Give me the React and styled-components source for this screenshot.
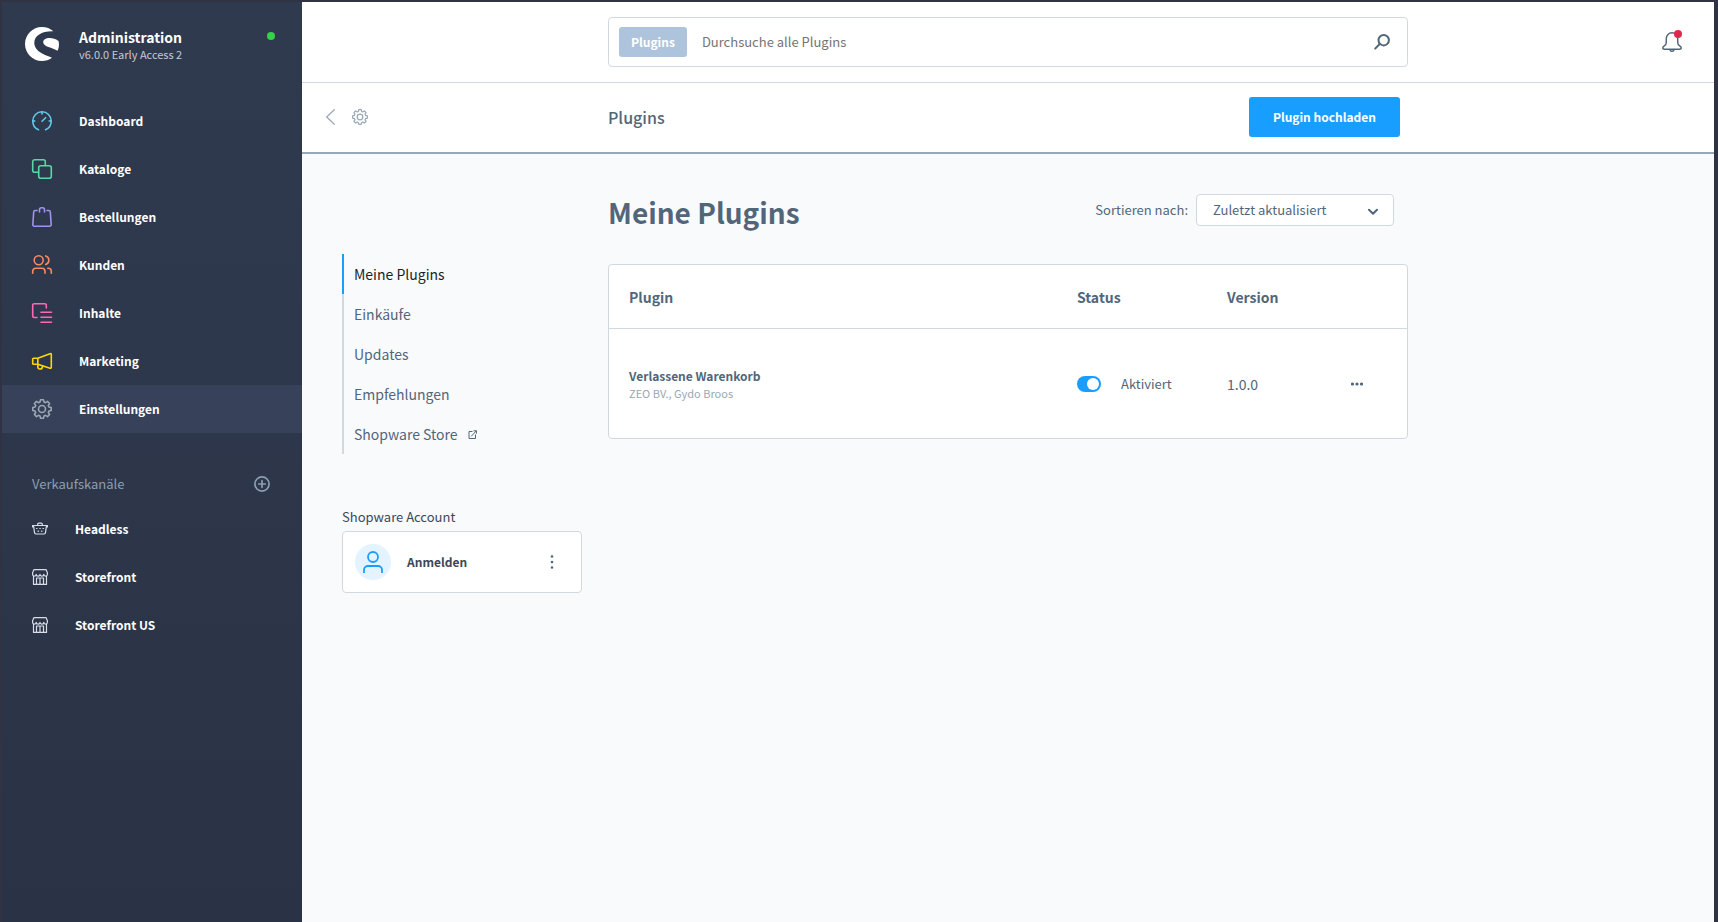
import { useState } from "react";
import styled, { createGlobalStyle } from "styled-components";

const line = { fill: "none", stroke: "currentColor", strokeLinecap: "round", strokeLinejoin: "round" };

function Logo() {
    return (
        <svg width="34" height="34" viewBox="0 0 34 34" fill="#fff" aria-hidden="true">
            <path d="M28.4 4.300C25.300 1.500 21.300 0 17 0 7.600 0 0 7.600 0 17s7.600 17 17 17c3.700 0 7.100-1.100 10-3.200C22 28.400 9.300 25.500 9.300 15.800 9.300 8.500 17 3.900 28.400 4.300Z" />
            <path d="M33.500 14C30.500 11.800 27.500 11 24.800 11c-4.200 0-6.600 1.800-6.600 4.200 0 4.700 9.300 5.200 14.400 8.600C33.900 21 34.400 17.500 33.500 14Z" />
        </svg>
    );
}

function Gear({ size = 20, width = 1.6 }) {
    return (
        <svg width={size} height={size} viewBox="0 0 20 20" {...line} strokeWidth={width} aria-hidden="true">
            <path d="M8.500.8h3l.5 2.300 1.500.6 2-1.300 2.100 2.100-1.300 2 .6 1.500 2.300.5v3l-2.300.5-.6 1.500 1.300 2-2.100 2.100-2-1.300-1.500.6-.5 2.300h-3L8 16.900l-1.500-.6-2 1.300-2.100-2.100 1.300-2-.6-1.500L.8 11.500v-3L3.100 8l.6-1.500-1.300-2 2.100-2.100 2 1.300L8 3.100z" />
            <circle cx="10" cy="10" r="3.500" />
        </svg>
    );
}

const icons = {
    dashboard: (
        <>
            <path d="M6.500 18.700C3.100 17.400.8 14 .8 10A9.200 9.200 0 0 1 19.200 10c0 4-2.300 7.400-5.700 8.700" />
            <path d="M10 10.300 13.600 6.700M10 .8v2.100M.8 10h2M17.200 10h2" />
        </>
    ),
    catalog: (
        <>
            <rect x="6.700" y="6.700" width="12.600" height="12.600" rx="2" />
            <path d="M6.500 13.300H2.700a2 2 0 0 1-2-2V2.700a2 2 0 0 1 2-2h8.600a2 2 0 0 1 2 2v3.800" />
        </>
    ),
    orders: (
        <>
            <path d="M5 3.500H3.300a1.600 1.600 0 0 0-1.600 1.500L.8 17.600a1.600 1.600 0 0 0 1.600 1.700h15.200a1.600 1.600 0 0 0 1.600-1.700L18.300 5a1.600 1.600 0 0 0-1.600-1.500H15" />
            <path d="M7.500 5V2.700A2 2 0 0 1 9.500.7h1a2 2 0 0 1 2 2V5" />
        </>
    ),
    customers: (
        <>
            <circle cx="6.700" cy="5.200" r="4.500" />
            <path d="M.7 18.300v-2.100a3 3 0 0 1 3-3H10a3 3 0 0 1 3 3v2.100M13.700.9a4.500 4.500 0 0 1 0 8.600M15.800 13.200h.5a3 3 0 0 1 3 3v2.100" />
        </>
    ),
    content: (
        <path d="M5 14.500H2.200a1.500 1.500 0 0 1-1.500-1.500V2.200A1.500 1.500 0 0 1 2.200.7h10.600a1.500 1.500 0 0 1 1.500 1.500V5M9 9.300h10.500M9 14.300h10.500M9 19.300h10.500" />
    ),
    marketing: (
        <path d="M5.800 7.300 18 2.700c.8-.3 1.300.1 1.300.8v12.900c0 .7-.5 1.100-1.300.8L5.800 13.300zM5.800 7.300H1.500a.8.8 0 0 0-.8.8v4.400c0 .5.300.8.8.8h4.300M5.800 13.300v2.300a2.300 2.300 0 0 0 4.600.3v-.9" />
    ),
};

function MenuIcon({ name }) {
    if (name === "settings") return <Gear />;
    return (
        <svg width="20" height="20" viewBox="0 0 20 20" overflow="visible" {...line} strokeWidth="1.600" aria-hidden="true">
            {icons[name]}
        </svg>
    );
}

function ChannelIcon({ name }) {
    return (
        <svg width="16" height="16" viewBox="0 0 16 16" {...line} strokeWidth="1.200" aria-hidden="true">
            {name === "basket" ? (
                <>
                    <path d="M1 4.500h14M1.500 4.500l1 7.200a1.500 1.500 0 0 0 1.500 1.300h8a1.500 1.500 0 0 0 1.500-1.300l1-7.200M.6 4.500v1.500M15.400 4.500v1.500M5.700 4.300V3.200a1 1 0 0 1 1-1h2.600a1 1 0 0 1 1 1v1.100" />
                    <path d="M4.500 7.500h.5M7.800 7.500h.5M11 7.500h.5M6 10.200h.5M9.500 10.200h.5" />
                </>
            ) : (
                <path d="M2 .6h12l1.400 3.200v1.500a1.800 1.800 0 0 1-3.600 0 1.900 1.900 0 0 1-3.800 0 1.900 1.900 0 0 1-3.800 0 1.800 1.800 0 0 1-3.600 0V3.800zM1.500 7v8.400h13V7M4.500 15.400V9h7v6.400M8 9v6.400" />
            )}
        </svg>
    );
}

const menu = [
    { label: "Dashboard", icon: "dashboard", color: "#5fcbe8" },
    { label: "Kataloge", icon: "catalog", color: "#57d9a3" },
    { label: "Bestellungen", icon: "orders", color: "#a092f0" },
    { label: "Kunden", icon: "customers", color: "#f88962" },
    { label: "Inhalte", icon: "content", color: "#ff68b4" },
    { label: "Marketing", icon: "marketing", color: "#ffd700" },
    { label: "Einstellungen", icon: "settings", color: "#9aa8b5", active: true },
];

const channels = [
    { label: "Headless", icon: "basket" },
    { label: "Storefront", icon: "store" },
    { label: "Storefront US", icon: "store" },
];

const tabs = ["Meine Plugins", "Einkäufe", "Updates", "Empfehlungen", "Shopware Store"];

export default function App() {
    const [tab, setTab] = useState("Meine Plugins");
    const [active, setActive] = useState(true);

    return (
        <>
            <GlobalStyle />
            <Layout>
                <Sidebar>
                    <Brand>
                        <Logo />
                        <div>
                            <BrandName>Administration</BrandName>
                            <BrandVersion>v6.0.0 Early Access 2</BrandVersion>
                        </div>
                        <OnlineDot />
                    </Brand>
                    <nav>
                        {menu.map((item) => (
                            <MenuLink href="#" key={item.label} $active={item.active} $color={item.color}>
                                <MenuIcon name={item.icon} />
                                <span>{item.label}</span>
                            </MenuLink>
                        ))}
                    </nav>
                    <ChannelHead>
                        <span>Verkaufskanäle</span>
                        <IconButton aria-label="Verkaufskanal hinzufügen">
                            <svg width="16" height="16" viewBox="0 0 16 16" {...line} strokeWidth="1.700">
                                <circle cx="8" cy="8" r="7.100" />
                                <path d="M8 4.700v6.600M4.700 8h6.600" />
                            </svg>
                        </IconButton>
                    </ChannelHead>
                    <nav>
                        {channels.map((item) => (
                            <MenuLink href="#" key={item.label} $color="#d8dde6">
                                <ChannelIcon name={item.icon} />
                                <span>{item.label}</span>
                            </MenuLink>
                        ))}
                    </nav>
                </Sidebar>

                <Main>
                    <TopBar>
                        <Search>
                            <SearchTag>Plugins</SearchTag>
                            <input type="search" aria-label="Durchsuche alle Plugins" placeholder="Durchsuche alle Plugins" />
                            <IconButton aria-label="Suchen">
                                <svg width="16" height="16" viewBox="0 0 16 16" {...line} strokeWidth="2">
                                    <circle cx="9.700" cy="6.200" r="5.200" />
                                    <path d="M5.600 10 1.200 14.600" />
                                </svg>
                            </IconButton>
                        </Search>
                        <BarEnd>
                            <BellButton aria-label="Benachrichtigungen">
                                <svg width="20" height="20" viewBox="0 0 20 20" {...line} strokeWidth="1.500">
                                    <path d="M10 .8a5.700 5.700 0 0 0-5.700 5.700v3.700c0 1.700-.7 3-2.300 4-1.700 1.100-1.600 3 .3 3h15.400c1.900 0 2-1.900.3-3-1.600-1-2.300-2.300-2.300-4V6.500A5.700 5.700 0 0 0 10 .8z" />
                                    <path d="M8 17.800c.3 1.800 3.700 1.800 4 0" />
                                </svg>
                            </BellButton>
                        </BarEnd>
                    </TopBar>

                    <PageBar>
                        <BarStart>
                            <IconButton aria-label="Zurück">
                                <svg width="10" height="16" viewBox="0 0 10 16" {...line} strokeWidth="1.200">
                                    <path d="M8.300.7.700 8l7.600 7.300" />
                                </svg>
                            </IconButton>
                            <IconButton aria-label="Einstellungen">
                                <Gear size={16} width={1.5} />
                            </IconButton>
                        </BarStart>
                        <PageTitle>
                            <h2>Plugins</h2>
                            <UploadButton>Plugin hochladen</UploadButton>
                        </PageTitle>
                    </PageBar>

                    <Content>
                        <Side>
                            <Tabs>
                                {tabs.map((name) => (
                                    <Tab href="#" key={name} $active={name === tab} onClick={() => setTab(name)}>
                                        {name}
                                        {name === "Shopware Store" && (
                                            <svg width="9" height="9" viewBox="0 0 9 9" {...line} strokeLinecap="square" aria-hidden="true">
                                                <path d="M4 1.500H1v7h6.500V5M3.500 6 8.300.9M6 .8h2.400v2.400" />
                                            </svg>
                                        )}
                                    </Tab>
                                ))}
                            </Tabs>
                            <AccountLabel>Shopware Account</AccountLabel>
                            <Account>
                                <Avatar>
                                    <svg width="20" height="22" viewBox="0 0 20 22" {...line} strokeWidth="1.800" strokeLinecap="butt">
                                        <circle cx="10" cy="6" r="5" />
                                        <path d="M1 22v-3a4 4 0 0 1 4-4h10a4 4 0 0 1 4 4v3" />
                                    </svg>
                                </Avatar>
                                <strong>Anmelden</strong>
                                <IconButton aria-label="Kontomenü">
                                    <svg width="4" height="14" viewBox="0 0 4 14" fill="currentColor">
                                        <circle cx="2" cy="1.500" r="1.300" />
                                        <circle cx="2" cy="7" r="1.300" />
                                        <circle cx="2" cy="12.500" r="1.300" />
                                    </svg>
                                </IconButton>
                            </Account>
                        </Side>

                        <section>
                            <ListHead>
                                <h1>Meine Plugins</h1>
                                <Sort>
                                    <label htmlFor="sort">Sortieren nach:</label>
                                    <SelectBox>
                                        <select id="sort">
                                            <option>Zuletzt aktualisiert</option>
                                        </select>
                                        <svg width="10" height="8" viewBox="0 0 10 8" {...line} strokeWidth="2" aria-hidden="true">
                                            <path d="M1 1.800 5 5.800 9 1.800" />
                                        </svg>
                                    </SelectBox>
                                </Sort>
                            </ListHead>
                            <Card>
                                <Table>
                                    <colgroup>
                                        <col />
                                        <col width="150" />
                                        <col width="112" />
                                        <col width="88" />
                                    </colgroup>
                                    <thead>
                                        <tr>
                                            <th>Plugin</th>
                                            <th>Status</th>
                                            <th>Version</th>
                                            <th></th>
                                        </tr>
                                    </thead>
                                    <tbody>
                                        <tr>
                                            <td>
                                                <PluginName>Verlassene Warenkorb</PluginName>
                                                <PluginVendor>ZEO BV., Gydo Broos</PluginVendor>
                                            </td>
                                            <td>
                                                <SwitchLabel>
                                                    <Switch type="checkbox" checked={active} onChange={() => setActive(!active)} />
                                                    Aktiviert
                                                </SwitchLabel>
                                            </td>
                                            <td>1.0.0</td>
                                            <td>
                                                <RowButton aria-label="Aktionen">
                                                    <svg width="12" height="4" viewBox="0 0 12 4" fill="currentColor">
                                                        <circle cx="1.500" cy="2" r="1.600" />
                                                        <circle cx="6" cy="2" r="1.600" />
                                                        <circle cx="10.500" cy="2" r="1.600" />
                                                    </svg>
                                                </RowButton>
                                            </td>
                                        </tr>
                                    </tbody>
                                </Table>
                            </Card>
                        </section>
                    </Content>
                </Main>
            </Layout>
        </>
    );
}

const GlobalStyle = createGlobalStyle`
    *{
        box-sizing: border-box;
    }
    body{
        margin: 0;
        background: #2f3640;
        color: #52667a;
        font-family: "Source Sans Pro", "Noto Sans CJK SC", "Noto Sans", sans-serif;
        font-size: 13px;
        line-height: 20px;
    }
    h1, h2{
        margin: 0;
    }
    a{
        text-decoration: none;
    }
    svg{
        display: block;
        flex-shrink: 0;
    }
    button, input, select{
        font: inherit;
    }
`

const Layout = styled.div`
    display: grid;
    grid-template-columns: 300px 1fr;
    min-height: 100vh;
    border: solid #2f3343;
    border-width: 2px 4px 0 2px;
`

const Sidebar = styled.aside`
    background: linear-gradient(#303a4f, #2a3345);
    color: #fff;
`

const Brand = styled.div`
    display: grid;
    grid-template-columns: 34px 1fr 8px;
    column-gap: 20px;
    height: 95px;
    padding: 25px 27px 0 23px;
`

const BrandName = styled.div`
    font-size: 14px;
    font-weight: 700;
`

const BrandVersion = styled.div`
    color: #c3cad3;
    font-size: 11px;
    line-height: 14px;
`

const OnlineDot = styled.span`
    width: 8px;
    height: 8px;
    margin-top: 5px;
    border-radius: 50%;
    background: #37d046;
`

const MenuLink = styled.a`
    display: flex;
    align-items: center;
    gap: 27px;
    height: 48px;
    padding: 0 30px;
    background: ${(props) => (props.$active ? "#37415a" : "transparent")};
    color: #fff;
    font-size: 12px;
    font-weight: 700;

    svg{
        color: ${(props) => props.$color};
    }
`

const ChannelHead = styled.div`
    display: flex;
    align-items: center;
    justify-content: space-between;
    padding: 41px 32px 11px 30px;
    color: #8b9fb0;
`

const IconButton = styled.button`
    display: flex;
    padding: 0;
    border: 0;
    background: none;
    color: inherit;
    cursor: pointer;
`

const Main = styled.main`
    background: #f9fafc;
`

const TopBar = styled.header`
    display: grid;
    grid-template-columns: 1fr 800px 1fr;
    align-items: center;
    height: 81px;
    border-bottom: 1px solid #d1d9e0;
    background: #fff;
`

const Search = styled.div`
    grid-column: 2;
    display: flex;
    align-items: center;
    height: 50px;
    padding: 0 17px 0 10px;
    border: 1px solid #d1d9e0;
    border-radius: 4px;

    input{
        flex: 1;
        padding: 0 15px;
        border: 0;
        outline: 0;
        background: none;
    }
    input::placeholder{
        color: #757575;
    }
`

const SearchTag = styled.span`
    padding: 5px 12px;
    border-radius: 3px;
    background: #aec4dc;
    color: #fff;
    font-size: 12px;
    font-weight: 700;
`

const BarEnd = styled.div`
    display: flex;
    justify-content: flex-end;
    padding-right: 32px;
`

const BellButton = styled(IconButton)`
    position: relative;

    &::after{
        content: "";
        position: absolute;
        top: -2px;
        right: 0;
        width: 8px;
        height: 8px;
        border-radius: 50%;
        background: #de294c;
    }
`

const PageBar = styled.div`
    display: grid;
    grid-template-columns: 1fr 800px 1fr;
    align-items: center;
    padding: 14px 0 15px;
    border-bottom: 2px solid #98a7b6;
    background: #fff;
`

const BarStart = styled.div`
    display: flex;
    gap: 16px;
    padding-left: 24px;
    color: #98a7b6;
`

const PageTitle = styled.div`
    display: flex;
    align-items: center;
    justify-content: space-between;
    padding-right: 8px;

    h2{
        font-size: 16px;
        font-weight: 500;
    }
`

const UploadButton = styled.button`
    height: 40px;
    padding: 0 24px;
    border: 0;
    border-radius: 3px;
    background: #189eff;
    color: #fff;
    font-size: 12px;
    font-weight: 700;
    cursor: pointer;
`

const Content = styled.div`
    display: grid;
    grid-template-columns: 1fr 800px 1fr;
`

const Side = styled.aside`
    padding: 100px 26px 0 40px;
`

const Tabs = styled.nav`
    display: flex;
    flex-direction: column;
`

const Tab = styled.a`
    display: flex;
    align-items: center;
    gap: 10px;
    height: 40px;
    padding-left: 10px;
    border-left: 2px solid ${(props) => (props.$active ? "#189eff" : "#d1d9e0")};
    color: ${(props) => (props.$active ? "#1a1f29" : "#52667a")};
    font-size: 14px;
`

const AccountLabel = styled.div`
    margin: 53px 0 4px;
    color: #3d4758;
`

const Account = styled.div`
    display: flex;
    align-items: center;
    gap: 16px;
    height: 62px;
    padding: 0 27px 0 12px;
    border: 1px solid #d1d9e0;
    border-radius: 4px;
    background: #fff;

    strong{
        flex: 1;
        color: #3d4758;
        font-size: 12px;
        font-weight: 700;
    }
`

const Avatar = styled.span`
    display: flex;
    align-items: center;
    justify-content: center;
    width: 36px;
    height: 36px;
    border-radius: 50%;
    background: #e3f3ff;
    color: #189eff;
`

const ListHead = styled.div`
    display: flex;
    align-items: flex-start;
    justify-content: space-between;
    padding: 40px 14px 34px 0;

    h1{
        font-size: 28px;
        font-weight: 700;
        line-height: 36px;
    }
`

const Sort = styled.div`
    display: flex;
    align-items: center;
    gap: 8px;
`

const SelectBox = styled.div`
    display: grid;
    align-items: center;

    select{
        grid-area: 1 / 1;
        width: 198px;
        height: 32px;
        padding: 0 16px;
        border: 1px solid #d1d9e0;
        border-radius: 4px;
        appearance: none;
        background: #fff;
        color: #52667a;
    }
    svg{
        grid-area: 1 / 1;
        justify-self: end;
        margin: 4px 16px 0 0;
        pointer-events: none;
    }
`

const Card = styled.div`
    border: 1px solid #d1d9e0;
    border-radius: 4px;
    background: #fff;
`

const Table = styled.table`
    width: 100%;
    table-layout: fixed;
    border-spacing: 0;
    font-size: 14px;
    text-align: left;

    th, td{
        padding: 0 0 0 20px;
    }
    th{
        height: 64px;
        border-bottom: 1px solid #d1d9e0;
        font-weight: 700;
    }
    td{
        height: 109px;
    }
`

const PluginName = styled.div`
    font-size: 12px;
    font-weight: 700;
    line-height: 18px;
`

const PluginVendor = styled.div`
    color: #98a7b6;
    font-size: 11px;
    line-height: 16px;
`

const SwitchLabel = styled.label`
    display: flex;
    align-items: center;
    gap: 20px;
    font-size: 13px;
`

const Switch = styled.input`
    appearance: none;
    display: flex;
    width: 24px;
    height: 16px;
    margin: 0;
    padding: 2px;
    border-radius: 8px;
    background: #d1d9e0;

    &::before{
        content: "";
        width: 12px;
        height: 12px;
        border-radius: 50%;
        background: #fff;
    }
    &:checked{
        justify-content: flex-end;
        background: #189eff;
    }
`

const RowButton = styled(IconButton)`
    padding: 12px;
`
